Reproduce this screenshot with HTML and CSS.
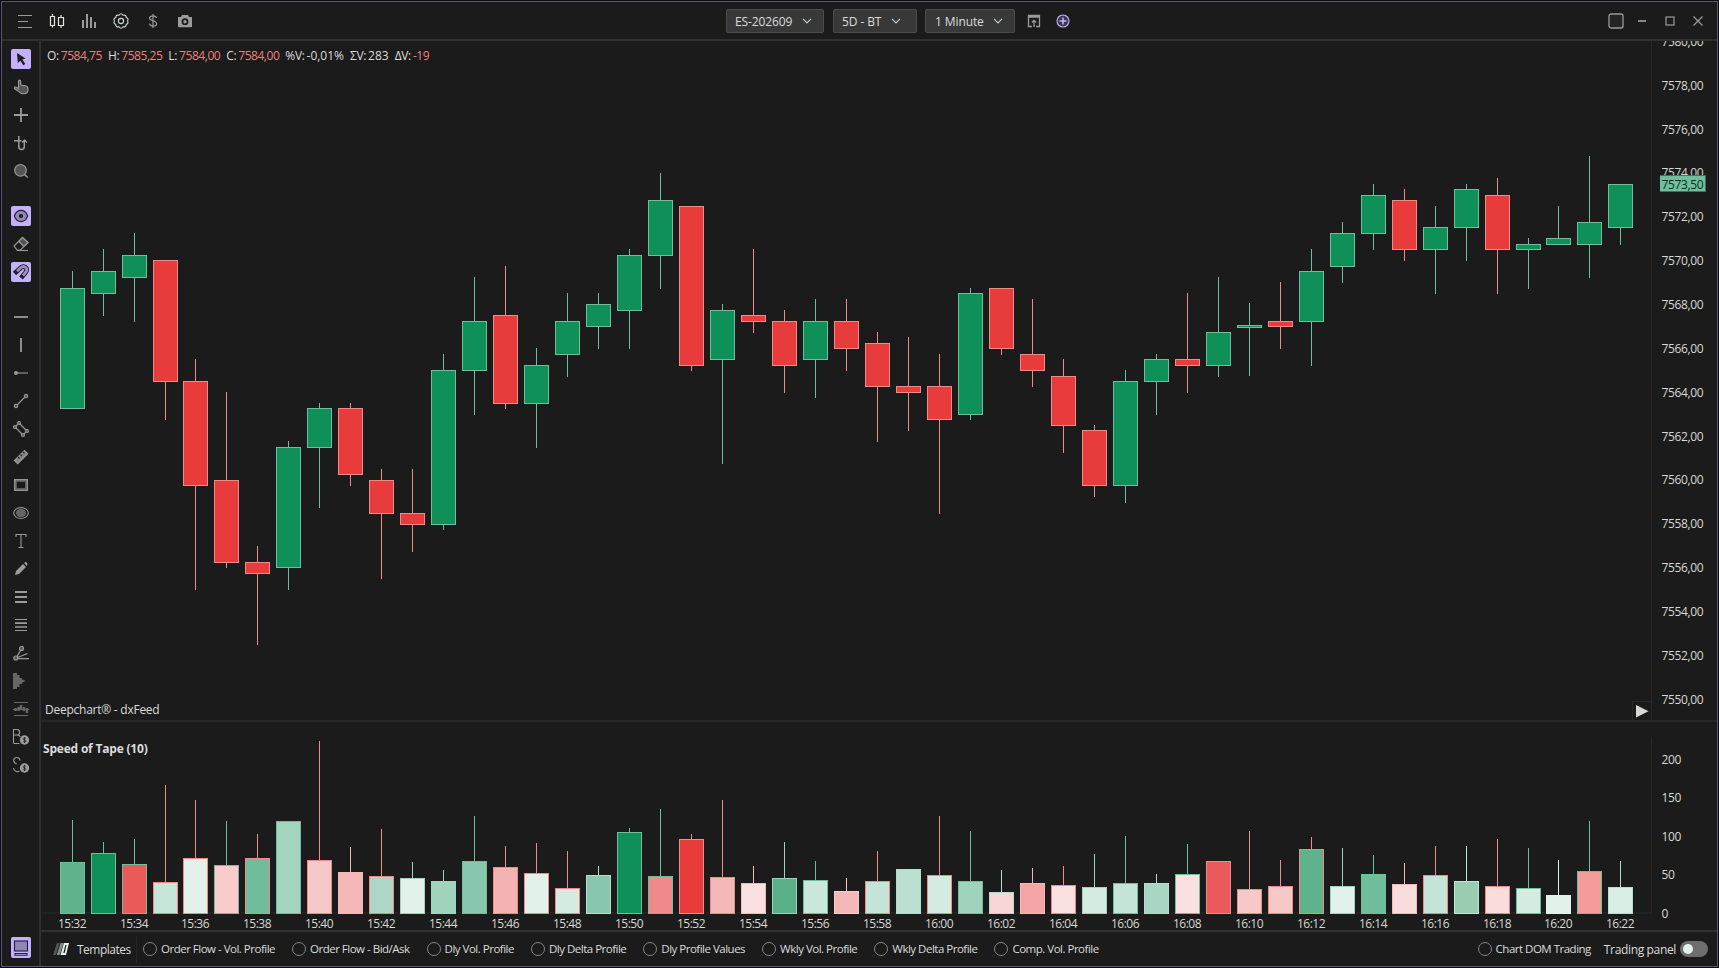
FILE: index.html
```html
<!DOCTYPE html>
<html lang="en">

<head>
  <meta charset="UTF-8">
  <meta name="viewport" content="width=device-width, initial-scale=1.0">
  <title>Deepchart - ES-202609</title>
  <link rel="stylesheet" href="styles.css">
</head>

<body>

  <div class="window">

    <header class="topbar">
      <div class="topbar-left">
        <svg class="icon" viewBox="0 0 16 16"><path d="M1 2.500h14M1 8.500h10M1 14.500h14"/></svg>
        <svg class="icon bright" viewBox="0 0 16 16"><path d="M1.500 3.500h4v9h-4zM9.500 4.500h5v8h-5zM3.500 1v2.500M3.500 12.500v2M12 2v2.500M12 12.500v2.500" stroke-width="1.200"/></svg>
        <svg class="icon" viewBox="0 0 16 16"><path d="M2 15V7M6 15V1M10 15V4M14 15V9" stroke-width="2"/></svg>
        <svg class="icon mint" viewBox="0 0 16 16"><path d="M6 2.200Q8-.6 10 2.200q3.400-.6 3.200 2.400 2.900 1.100 1.300 3.400 1.600 2.300-1.300 3.400.2 3-3.200 2.400-2 2.800-4 0-3.400.6-3.200-2.400Q-.1 10.300 1.500 8-.1 5.700 2.800 4.600 2.600 1.600 6 2.200z"/><circle cx="8" cy="8" r="2.600"/></svg>
        <svg class="icon" viewBox="0 0 16 16"><path d="M11.500 5C11.300 3.600 10 2.900 8 2.900S4.600 3.700 4.600 5.200c0 3.300 7 1.700 7 5.300 0 1.700-1.400 2.600-3.500 2.600-2.200 0-3.500-.9-3.700-2.600M8 1v14" stroke-width="1.200"/></svg>
        <svg class="icon" viewBox="0 0 16 16"><path class="solid" fill-rule="evenodd" d="M5 2h6l1 2h2.500q.5 0 .5.500v9q0 .8-.8.800H1.800q-.8 0-.8-.8v-9Q1 4 1.500 4H4zM8 5.300a3.400 3.400 0 1 0 0 6.800 3.400 3.400 0 0 0 0-6.800z"/><circle class="solid" cx="8" cy="8.700" r="1.700"/></svg>
      </div>

      <div class="topbar-center">
        <div class="select select-symbol"><span>ES-202609</span><svg class="chevron" viewBox="0 0 10 6"><path d="M1 .8 5 4.800 9 .8"/></svg></div>
        <div class="select select-range"><span>5D - BT</span><svg class="chevron" viewBox="0 0 10 6"><path d="M1 .8 5 4.800 9 .8"/></svg></div>
        <div class="select select-period"><span>1 Minute</span><svg class="chevron" viewBox="0 0 10 6"><path d="M1 .8 5 4.800 9 .8"/></svg></div>
        <svg class="icon export" viewBox="0 0 16 16"><path d="M6 13.500H2.500v-11h11v11H10M2.500 4h11M8 14V7.500M5.800 9.500 8 7.300l2.200 2.200" stroke-width="1.300"/></svg>
        <svg class="icon add" viewBox="0 0 16 16"><circle cx="8" cy="8" r="6" fill="#3c3850"/><path d="M8 4.500v7M4.500 8h7" stroke-width="1.500"/></svg>
      </div>

      <div class="topbar-right">
        <svg class="icon" viewBox="0 0 16 16"><rect x="1" y="1" width="14" height="14" rx="2" fill="#242424" stroke-width="1.300"/></svg>
        <svg class="icon" viewBox="0 0 16 16"><path d="M4 8h8" stroke-width="1.700"/></svg>
        <svg class="icon" viewBox="0 0 16 16"><rect x="4" y="4" width="8" height="8" stroke-width="1.200"/></svg>
        <svg class="icon" viewBox="0 0 16 16"><path d="m3.500 3.500 9 9M12.500 3.500l-9 9" stroke-width="1.200"/></svg>
      </div>
    </header>

    <nav class="tools">
      <!-- cursors -->
      <div class="tool active"><svg class="icon" viewBox="0 0 16 16"><path class="solid" d="m4 2 8.500 5.500-3.200.9 3 4.600-2 1.300-2.900-4.600L4.800 12z"/></svg></div>
      <div class="tool"><svg class="icon" viewBox="0 0 16 16"><path class="soft" d="M5.500 8V2.500c0-1.800 2.200-1.800 2.200 0V6l4.500.7c2 .3 2.800 1.200 2.800 3v1c0 2.500-1.500 4-4.500 4-2.600 0-3.700-.7-5-2.500L1.500 9.500c-.6-1.200.7-2 1.800-1.300l2.200 1.300z"/></svg></div>
      <div class="tool"><svg class="icon" viewBox="0 0 16 16"><path d="M8 1v14M1 8h14" stroke-width="1.800"/></svg></div>
      <div class="tool"><svg class="icon" viewBox="0 0 16 16"><path d="M5.800 1v10.500c0 4 5.500 4 5.500 0V6M1 5.700h7.500M9 7.500 11.500 5 14 7.500" stroke-width="1.500"/></svg></div>
      <div class="tool"><svg class="icon" viewBox="0 0 16 16"><circle class="soft" cx="7.500" cy="7.300" r="5.800"/><path d="m11.500 11.500 3.300 3" stroke-width="1.500"/></svg></div>
      <div class="tool-gap"></div>
      <div class="tool active"><svg class="icon" viewBox="0 0 16 16"><path class="lilac" d="M1.300 8C2.700 4.200 5.300 2.400 8 2.400S13.300 4.200 14.700 8c-1.400 3.800-4 5.600-6.700 5.600S2.700 11.800 1.300 8z"/><circle class="solid" cx="8" cy="8" r="2.100"/></svg></div>
      <div class="tool"><svg class="icon" viewBox="0 0 16 16"><path d="M1 10 9.500 1.500 15 6.500 7.500 14H4z"/><path class="soft" d="M5.700 5.500 9.500 1.500 15 6.500l-4.200 4z"/><path d="M4 14.500h11"/></svg></div>
      <div class="tool active"><svg class="icon" viewBox="0 0 16 16"><path d="M1.500 9.500 7.500 4c4-3.800 8.300 1 5 4.500L8 14" stroke-width="4.800"/><path class="inner" d="M4 7.200 7.500 4c4-3.800 8.300 1 5 4.500L10 11.500" stroke-width="2.800"/></svg></div>
      <div class="tool-gap"></div>
      <!-- drawings -->
      <div class="tool"><svg class="icon" viewBox="0 0 16 16"><path d="M1 8h14" stroke-width="1.800"/></svg></div>
      <div class="tool"><svg class="icon" viewBox="0 0 16 16"><path d="M8 1v14" stroke-width="1.800"/></svg></div>
      <div class="tool"><svg class="icon" viewBox="0 0 16 16"><path d="M3 8h12"/><circle class="solid" cx="3" cy="8" r="2"/></svg></div>
      <div class="tool"><svg class="icon" viewBox="0 0 16 16"><path d="m4 12 8-8"/><circle class="soft" cx="3" cy="13" r="1.700"/><circle class="soft" cx="13" cy="3" r="1.700"/></svg></div>
      <div class="tool"><svg class="icon" viewBox="0 0 16 16"><path d="m2 6 8 8M6 2l8 8M2 6l4-4M10 14l4-4"/><circle class="soft" cx="2" cy="6" r="1.500"/><circle class="soft" cx="6" cy="2" r="1.500"/><circle class="soft" cx="10" cy="14" r="1.500"/><circle class="soft" cx="14" cy="10" r="1.500"/></svg></div>
      <div class="tool"><svg class="icon" viewBox="0 0 16 16"><path class="mid" d="m1.500 11.500 10-10 3.200 3.200-10 10z"/><path class="dark" d="m5 8 1.500 1.500M7.500 5.500 9 7M10 3l1.500 1.500"/></svg></div>
      <div class="tool"><svg class="icon" viewBox="0 0 16 16"><rect x="1.700" y="2.700" width="12.600" height="10.600" fill="#5a5a5a" stroke-width="1.300"/><rect x="4" y="5" width="8" height="6" fill="#1b1b1b" stroke="none"/></svg></div>
      <div class="tool"><svg class="icon" viewBox="0 0 16 16"><ellipse cx="8" cy="8" rx="7.300" ry="5.500"/><ellipse class="shape" cx="8" cy="8" rx="5" ry="4.200"/></svg></div>
      <div class="tool"><svg class="icon" viewBox="0 0 16 16"><path d="M3 4V1.500h10V4M8 1.500v13M5.500 14.500h5"/></svg></div>
      <div class="tool"><svg class="icon" viewBox="0 0 16 16"><path class="solid" d="m2 14 1-4 7-7 3 3-7 7zM11 2l1.500-1c.8-.3 2.200 1 2 2L13.800 5z"/></svg></div>
      <div class="tool"><svg class="icon" viewBox="0 0 16 16"><path d="M2 3h12M2 8h12M2 13h12" stroke-width="1.800"/></svg></div>
      <div class="tool"><svg class="icon" viewBox="0 0 16 16"><path d="M2 2.500h12M2 13.500h12"/><path d="M2 6.200h12M2 10h12" stroke-width="1.700"/></svg></div>
      <div class="tool"><svg class="icon" viewBox="0 0 16 16"><path d="m3 13 5.500-9L10 1M3.500 13l11-4.500M5 13.700h11" stroke-width="1.300"/><circle class="soft" cx="2.800" cy="13" r="2"/><circle class="soft" cx="8.500" cy="3.500" r="2"/></svg></div>
      <div class="tool"><svg class="icon" viewBox="0 0 16 16"><path class="shape" d="M0 0h4v2h2.500v3H9v1.200L12.800 8 9 9.800V11H6.500v3H4v2H0z"/></svg></div>
      <div class="tool dim"><svg class="icon" viewBox="0 0 16 16"><path d="M1 1.500h14M1 14.500h14M0 8.500h16"/><path d="M2.500 10V7M5.500 10V6M8 8V4M11 10V6M14 12V7" stroke-width="2.400"/></svg></div>
      <div class="tool"><svg class="icon" viewBox="0 0 16 16"><path d="M.5 14.500V.5H4c3.500 0 3.500 5.500 0 5.500H.5M1 14.500h5.500M4 6c2 0 2.800.7 3 2"/><circle class="solid" cx="11.500" cy="11" r="4.700"/><path class="dark" d="M13 9.500c-1-1-3-.7-3 .5 0 1.400 3 .7 3 2 0 1.300-2.300 1.300-3 .3M11.500 8v6" stroke-width=".8"/></svg></div>
      <div class="tool"><svg class="icon" viewBox="0 0 16 16"><path d="M7 3.500C6.500-.5.7-.3.700 3.500c0 2 1.300 2.800 3 3.500M.5 11c.3 3 3.500 4.500 6 3"/><circle class="solid" cx="11.500" cy="11" r="4.700"/><path class="dark" d="M13 9.500c-1-1-3-.7-3 .5 0 1.400 3 .7 3 2 0 1.300-2.300 1.300-3 .3M11.500 8v6" stroke-width=".8"/></svg></div>
      <div class="tool active tool-bottom"><svg class="icon" viewBox="0 0 16 16"><rect class="lilac" x="1.500" y="1" width="13" height="10"/><path d="M2 13.500h12v1.800H2z"/></svg></div>
    </nav>

    <main class="chart">
      <section class="price-pane">
        <svg class="plot" id="price" viewBox="41 41 1675 679"></svg>
        <div class="ohlc">
          <span>O:<b>7584,75</b></span>
          <span>H:<b>7585,25</b></span>
          <span>L:<b>7584,00</b></span>
          <span>C:<b>7584,00</b></span>
          <span>%V:<i>-0,01%</i></span>
          <span>ΣV:<i>283</i></span>
          <span>ΔV:<b>-19</b></span>
        </div>
        <div class="feed">Deepchart® - dxFeed</div>
      </section>

      <section class="speed-pane">
        <svg class="plot" id="speed" viewBox="41 722 1675 208"></svg>
        <h2 class="pane-title">Speed of Tape (10)</h2>
      </section>

      <footer class="bottombar">
        <svg class="logo" viewBox="0 0 16 14"><path d="M0 13 4 1h2.800l-4 12z" fill="#555"/><path d="m3.700 13 4-12h3l-4 12z" fill="#8c8c8c"/><path d="m7.500 13 3.500-12h5l-3 12zm2.800-2h1.300l2-8h-1.200z" fill="#e3f1eb" fill-rule="evenodd"/></svg>
        <span class="templates">Templates</span>
        <div class="radios">
          <label class="radio">Order Flow - Vol. Profile</label>
          <label class="radio">Order Flow - Bid/Ask</label>
          <label class="radio">Dly Vol. Profile</label>
          <label class="radio">Dly Delta Profile</label>
          <label class="radio">Dly Profile Values</label>
          <label class="radio">Wkly Vol. Profile</label>
          <label class="radio">Wkly Delta Profile</label>
          <label class="radio">Comp. Vol. Profile</label>
        </div>
        <label class="radio">Chart DOM Trading</label>
        <span class="panel-label">Trading panel</span>
        <span class="toggle"></span>
      </footer>
    </main>

  </div>

  <script>

    // [high, body top, body bottom, low, color]
    const candles = [
      [271, 288, 409, 409, "g"], [249, 271, 294, 316, "g"], [233, 255, 278, 322, "g"], [260, 260, 382, 420, "r"],
      [359, 381, 486, 590, "r"], [392, 480, 563, 568, "r"], [546, 562, 574, 645, "r"], [441, 447, 568, 590, "g"],
      [403, 408, 448, 508, "g"], [403, 408, 475, 486, "r"], [469, 480, 514, 579, "r"], [469, 513, 525, 552, "r"],
      [354, 370, 525, 530, "g"], [277, 321, 371, 415, "g"], [266, 315, 404, 409, "r"], [348, 365, 404, 448, "g"],
      [293, 321, 355, 377, "g"], [293, 304, 327, 349, "g"], [249, 255, 311, 349, "g"], [173, 200, 256, 289, "g"],
      [206, 206, 366, 371, "r"], [304, 310, 360, 464, "g"], [249, 315, 322, 333, "r"], [310, 321, 366, 393, "r"],
      [299, 321, 360, 398, "g"], [299, 321, 349, 371, "r"], [332, 343, 387, 442, "r"], [337, 386, 393, 431, "r"],
      [354, 386, 420, 514, "r"], [288, 293, 415, 420, "g"], [288, 288, 349, 355, "r"], [299, 354, 371, 387, "r"],
      [359, 376, 426, 453, "r"], [425, 430, 486, 497, "r"], [370, 381, 486, 503, "g"], [354, 359, 382, 415, "g"],
      [293, 359, 366, 393, "r"], [277, 332, 366, 377, "g"], [303, 325, 328, 376, "g"], [282, 321, 327, 349, "r"],
      [249, 271, 322, 366, "g"], [222, 233, 267, 283, "g"], [184, 195, 234, 250, "g"], [189, 200, 250, 261, "r"],
      [206, 227, 250, 294, "g"], [184, 189, 228, 261, "g"], [178, 195, 250, 294, "r"], [238, 244, 250, 289, "g"],
      [206, 238, 245, 245, "g"], [156, 222, 245, 278, "g"], [184, 184, 228, 245, "g"]
    ];

    const G = "#6fbf9d", R = "#f08a8a", LG = "#9fd3bd", PG = "#b5dccd", LR = "#f4b8b8";

    // [wick top, bar top, fill, border]
    const speed = [
      [820, 862, "#5eb28c", G], [842, 853, "#109059", G], [839, 864, "#ea5a58", G], [785, 882, "#c6e6d9", R],
      [800, 858, "#e3f1eb", R], [821, 865, "#f8cccc", G], [834, 858, "#70bd9b", R], [821, 821, "#a2d4be", G],
      [741, 860, "#f7c8c8", R], [847, 872, "#f4b8b8", LR], [829, 876, "#add6c6", R], [862, 878, "#e3f1eb", LG],
      [870, 881, "#a0d3bc", LG], [816, 861, "#88c7ad", G], [846, 867, "#f4b2b2", R], [843, 873, "#e3f1eb", R],
      [851, 888, "#d3ebe0", R], [866, 875, "#88c7ad", PG], [828, 832, "#109059", G], [809, 876, "#f08a8a", G],
      [834, 839, "#e83b3b", R], [800, 877, "#f4b8b8", R], [866, 883, "#fae0e0", LR], [842, 878, "#58af88", LG],
      [861, 880, "#c9e7da", G], [878, 891, "#f4b8b8", "#f8cccc"], [851, 881, "#c3e4d7", R], [869, 869, "#bbdfd1", PG],
      [816, 875, "#d3ebe0", R], [831, 881, "#a0d3bc", G], [870, 892, "#f9d6d6", PG], [868, 883, "#f5a5a5", LR],
      [866, 885, "#fae0e0", R], [854, 887, "#d3ebe0", LG], [836, 883, "#c3e4d7", G], [874, 883, "#a9d5c3", PG],
      [844, 874, "#fae0e0", G], [861, 861, "#ea5a5a", R], [831, 889, "#f7c8c8", R], [860, 886, "#f7c8c8", R],
      [837, 849, "#5eb28c", R], [848, 886, "#e1f0ea", LG], [855, 874, "#70bd9b", G], [863, 884, "#fbdcdc", LR],
      [846, 875, "#c3e4d7", R], [846, 881, "#98cdb2", "#c3e4d7"], [839, 886, "#fadcdc", R], [848, 888, "#d3ebe0", G],
      [860, 895, "#e3f1eb", "#e3f1eb"], [821, 871, "#f59b9b", G], [861, 887, "#d8ede4", PG]
    ];

    const BAR = 25;
    const BASE = 914;

    function centerX(i) {
      return 72 + 31 * i - (i >= 4 ? 1 : 0) - (i >= 48 ? 1 : 0);
    }

    function rect(x, y, w, h, fill) {
      return `<rect x="${x}" y="${y}" width="${w}" height="${h}" fill="${fill}"/>`;
    }

    function text(x, y, str, cls) {
      return `<text x="${x}" y="${y}" class="${cls}">${str}</text>`;
    }

    function drawBar(i, high, top, bottom, low, fill, border) {
      const x = centerX(i);
      return rect(x, high, 1, low - high, border)
        + rect(x - 12, top, BAR, bottom - top, border)
        + rect(x - 11, top + 1, BAR - 2, bottom - top - 2, fill);
    }

    function drawPrice() {
      let out = rect(1651, 41, 1, 679, "#272727");

      for (let p = 7580; p >= 7550; p -= 2) {
        out += text(1661.500, 89.800 + (7578 - p) * 21.92, p + ",00", "axis price");
      }

      candles.forEach((c, i) => {
        const up = c[4] === "g";
        out += drawBar(i, c[0], c[1], c[2], c[3], up ? "#109059" : "#e83b3b", up ? G : R);
      });

      // last price
      out += rect(1660, 175, 46, 17, "#4c6a5e") + rect(1660, 176, 45, 15, G);
      out += text(1661.500, 188.500, "7573,50", "axis price last");

      // jump to the latest bar
      out += `<path d="M1632.500 720V701.500h19V720" fill="none" stroke="#272727"/>`;
      out += `<path d="M1636 705v12.500l12.500-6.200z" fill="#d8d8d4"/>`;
      document.getElementById("price").innerHTML = out;
    }

    function drawSpeed() {
      let out = rect(41, 912, 1611, 2, "#222") + rect(1651, 737, 1, 177, "#272727");

      speed.forEach((s, i) => {
        out += drawBar(i, s[0], s[1], BASE, BASE, s[2], s[3]);
        if (i % 2 === 0) {
          const min = 32 + i;
          const time = (min < 60 ? "15:" : "16:") + String(min % 60).padStart(2, "0");
          out += text(centerX(i), 928, time, "axis time");
        }
      });

      [200, 150, 100, 50, 0].forEach((v, i) => {
        out += text(1661.500, 764 + i * 38.400, v, "axis");
      });
      document.getElementById("speed").innerHTML = out;
    }

    drawPrice();
    drawSpeed();
  </script>

</body>

</html>
```
FILE: styles.css
```css
* {
  box-sizing: border-box;
}

body {
  margin: 0;
  background-color: #0b0b0b;
  color: #dcdcdc;
  font-family: "Open Sans", "Noto Sans", sans-serif;
  font-size: 12px;
  letter-spacing: -0.35px;
  overflow: hidden;
}

.window {
  width: 1717px;
  height: 966px;
  margin: 1px;
  border: 1px solid #5d5478;
  background-color: #1b1b1b;
  display: grid;
  grid-template-columns: 39px 1fr;
  grid-template-rows: 39px 1fr;
}

.icon {
  width: 16px;
  height: 16px;
  fill: none;
  stroke: #9b9b9b;
  stroke-width: 1.1;
  flex: none;
  overflow: visible;
}

.icon .solid {
  fill: #9b9b9b;
  stroke: none;
}

.icon .soft {
  fill: #555;
}

.icon .mid {
  fill: #858585;
}

.icon .shape {
  fill: #666;
  stroke: none;
}

.icon .dark {
  fill: none;
  stroke: #222;
}

.icon.bright {
  stroke: #e6e6e0;
}

.icon.mint {
  stroke: #c5ddd5;
}

.icon.add {
  stroke: #c4b3fa;
}

/* top bar */
.topbar {
  grid-column: 1 / 3;
  border-bottom: 2px solid #303030;
  display: grid;
  grid-template-columns: 724px 1fr auto;
  align-items: center;
}

.topbar-left {
  display: flex;
  gap: 16px;
  padding-left: 15px;
}

.topbar-center {
  display: flex;
  align-items: center;
}

.topbar-right {
  display: flex;
  gap: 12px;
  padding-right: 11px;
}

.topbar-right .icon:first-child {
  margin-right: -2px;
}

.select {
  height: 24px;
  padding: 1px 11px 0 8px;
  border: 1px solid #4c4c4c;
  border-radius: 2px;
  background-color: #383838;
  letter-spacing: -0.1px;
  display: flex;
  align-items: center;
  justify-content: space-between;
}

.select-symbol {
  width: 98px;
  margin-right: 9px;
}

.select-range {
  width: 84px;
  margin-right: 8px;
  padding-right: 15px;
}

.select-period {
  width: 90px;
  margin-right: 11px;
  padding-left: 9px;
}

.chevron {
  width: 10px;
  height: 6px;
  fill: none;
  stroke: #b5cfc6;
  stroke-width: 1.2;
}

.export {
  margin-right: 13px;
}

/* drawing tools */
.tools {
  border-right: 2px solid #303030;
  padding-top: 4px;
  display: flex;
  flex-direction: column;
  align-items: center;
}

.tool {
  width: 20px;
  height: 20px;
  margin: 4px 0 4px 1px;
  border-radius: 2px;
  display: flex;
  align-items: center;
  justify-content: center;
  flex: none;
}

.tool.active {
  background-color: #c4b1fb;
}

.tool.active .icon {
  stroke: #24222b;
}

.tool.active .solid {
  fill: #1c1b20;
}

.tool .lilac {
  fill: #9186b5;
}

.tool .inner {
  stroke: #9a8fc0;
}

.tool.dim {
  opacity: 0.6;
}

.tool-gap {
  height: 17px;
  flex: none;
}

.tool-bottom {
  height: 21px;
  margin-top: auto;
  margin-bottom: 8px;
}

/* chart */
.chart {
  min-width: 0;
  display: grid;
  grid-template-rows: 681px 208px 1fr;
}

.price-pane,
.speed-pane {
  position: relative;
}

.price-pane {
  border-bottom: 2px solid #262626;
}

.plot {
  display: block;
  width: 1675px;
}

#speed {
  overflow: visible;
}

.axis {
  fill: #d8d8d4;
  font-size: 12px;
  letter-spacing: -0.35px;
}

.axis.time {
  text-anchor: middle;
  letter-spacing: -0.5px;
}

.axis.last {
  fill: #17281f;
}

/* labels drawn over the plots */
.ohlc {
  position: absolute;
  top: 7px;
  left: 6px;
  display: flex;
  gap: 6px;
  line-height: 16px;
  white-space: nowrap;
}

.ohlc b,
.ohlc i {
  margin-left: 2px;
  font-weight: normal;
  font-style: normal;
}

.ohlc b {
  color: #f27f7f;
  letter-spacing: -0.45px;
}

.ohlc i {
  letter-spacing: 0;
}

.feed {
  position: absolute;
  left: 4px;
  bottom: 2px;
  line-height: 16px;
  letter-spacing: -0.25px;
}

.pane-title {
  position: absolute;
  top: 19px;
  left: 2px;
  margin: 0;
  font-size: 12px;
  line-height: 16px;
  letter-spacing: -0.2px;
}

/* bottom bar */
.bottombar {
  border-top: 2px solid #303030;
  padding: 0 9px 0 12px;
  display: flex;
  align-items: center;
}

.logo {
  width: 16px;
  height: 14px;
  margin-right: 8px;
}

.templates {
  width: 60px;
  height: 27px;
  line-height: 27px;
  letter-spacing: -0.5px;
  border-right: 1px solid #272727;
}

.radios {
  display: flex;
  gap: 17px;
  margin-left: 6px;
  flex: 1;
}

.radio {
  margin-bottom: 1px;
  font-size: 11.5px;
  letter-spacing: -0.5px;
  display: flex;
  align-items: center;
  gap: 4px;
  white-space: nowrap;
}

.radio::before {
  content: "";
  width: 12px;
  height: 12px;
  border: 1px solid #858585;
  border-radius: 50%;
}

.panel-label {
  margin: 0 4px 0 13px;
}

.toggle {
  width: 28px;
  height: 16px;
  padding: 3px;
  border-radius: 8px;
  background-color: #6e6e6e;
}

.toggle::before {
  content: "";
  display: block;
  width: 10px;
  height: 10px;
  border-radius: 50%;
  background-color: #e3f1eb;
}
```
